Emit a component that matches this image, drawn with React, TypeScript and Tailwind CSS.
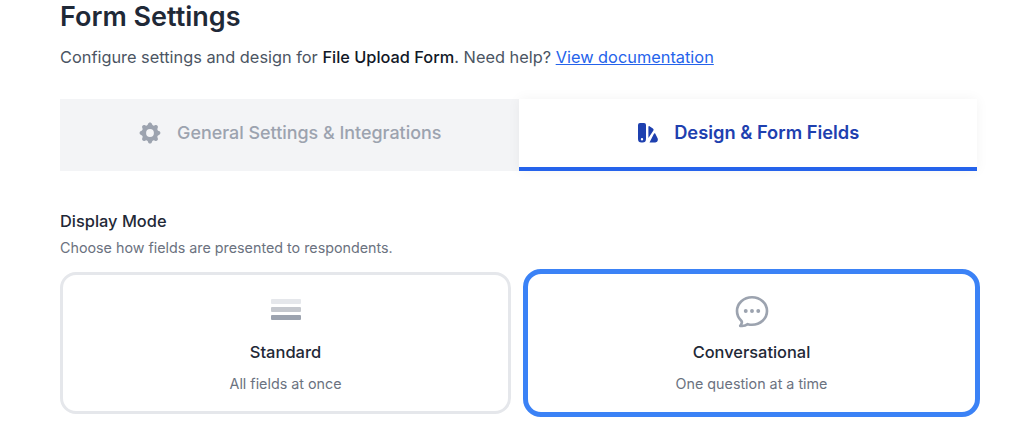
import React from 'react';
import { HiOutlineChatBubbleOvalLeftEllipsis } from 'react-icons/hi2';
import { HiCog } from 'react-icons/hi';

const FONT = 'font-["Inter",sans-serif]';

const SwatchIcon = () => (
    <svg viewBox="0 0 24 24" className="w-6 h-6" fill="currentColor">
        <path fillRule="evenodd" d="M4 2h4a2 2 0 0 1 2 2v14a3.500 3.500 0 0 1-3.500 3.500h-1A3.500 3.500 0 0 1 2 18V4a2 2 0 0 1 2-2Zm2 15a1.200 1.200 0 1 0 0 2.400A1.200 1.200 0 0 0 6 17Z" />
        <path d="M13.500 5.200l3.400 2.200a1.500 1.500 0 0 1 .5 2L12.400 17V6.200c0-.9.400-1.300 1.100-1Z" />
        <path d="M19.200 12.500l2.400 4.800c.8 2-.3 4.200-2.300 4.200H13.500l4.300-8.500c.4-.8 1-1 1.400-.5Z" />
    </svg>
);

const App: React.FC = () => {
    return (
        <div className={`${FONT} w-[1024px] h-[441px] overflow-hidden bg-white`}>
            <div className="pl-[60px] pr-[47px]">
                <h1 className="-mt-px text-[27px] leading-9 font-semibold text-[#1f2937]">Form Settings</h1>
                <p className="mt-[10px] text-[16.350px] leading-6 text-[#4b5563]">
                    Configure settings and design for <span className="font-medium text-[#111827]">File Upload Form</span>. Need help?{' '}
                    <a className="text-[#2563eb] underline">View documentation</a>
                </p>
                <div className="mt-[30px] grid grid-cols-2 h-[72px]">
                    <div className="flex items-center justify-center gap-[14px] pb-1 bg-[#f3f4f6] text-[#9ca3af]">
                        <HiCog className="w-[26px] h-[26px]" />
                        <span className="text-[17.900px] font-medium">General Settings &amp; Integrations</span>
                    </div>
                    <div className="flex items-center justify-center gap-[14px] bg-white border-b-4 border-[#2563eb] text-[#1e40af] shadow-[0_0_12px_rgba(0,0,0,0.05)]">
                        <SwatchIcon />
                        <span className="text-[18.300px] font-semibold">Design &amp; Form Fields</span>
                    </div>
                </div>
                <h2 className="mt-10 text-[16.400px] leading-5 font-medium text-[#1f2937]">Display Mode</h2>
                <p className="mt-[7px] text-[14.300px] leading-5 text-[#6b7280]">Choose how fields are presented to respondents.</p>
                <div className="mt-[14px] -mr-[3px] grid grid-cols-[451px_457px] gap-[12px]">
                    <div className="h-[142px] rounded-2xl border-[3px] border-[#e5e7eb] flex flex-col items-center pt-[24px]">
                        <div className="flex flex-col gap-[3px] w-[30px]">
                            <div className="h-[5px] rounded-[1px] bg-[#e5e7eb]" />
                            <div className="h-[5px] rounded-[1px] bg-[#c5c8ce]" />
                            <div className="h-[5px] rounded-[1px] bg-[#9ca3af]" />
                        </div>
                        <div className="mt-[20px] text-[16.500px] leading-6 font-medium text-[#1f2937]">Standard</div>
                        <div className="mt-[10px] text-[14.300px] leading-5 text-[#6b7280]">All fields at once</div>
                    </div>
                    <div className="-mt-[3px] h-[148px] rounded-[18px] border-[5px] border-[#3b82f6] flex flex-col items-center pt-[17px]">
                        <HiOutlineChatBubbleOvalLeftEllipsis className="w-10 h-10 text-[#9ca3af]" strokeWidth={1.600} />
                        <div className="mt-[9px] text-[16.400px] leading-6 font-medium text-[#1f2937]">Conversational</div>
                        <div className="mt-[10px] text-[14.300px] leading-5 text-[#6b7280]">One question at a time</div>
                    </div>
                </div>
            </div>
        </div>
    );
};

export default App;
